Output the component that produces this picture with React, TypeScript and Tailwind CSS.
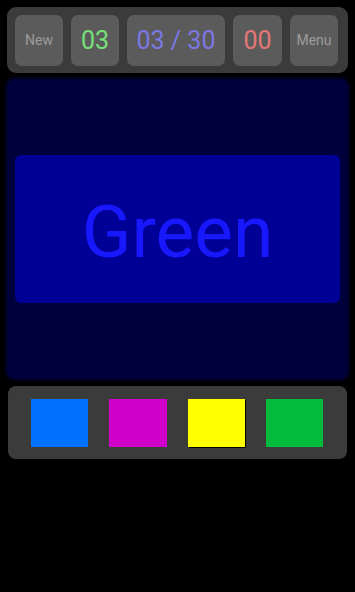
import React from "react";

export default function App() {
  const font = { fontFamily: "Roboto, 'Noto Sans', sans-serif" };
  return (
    <div className="w-[355px] h-[592px] bg-black overflow-hidden" style={font}>
      <div className="pt-[7px] px-[7px]">
        <div className="h-[66px] w-[341px] rounded-[9px] bg-[#3b3b3b] pt-[8px] pl-[8px] flex gap-[8px]">
          <div className="w-[48px] h-[51px] rounded-[7px] bg-[#5b5b5b] flex items-center justify-center text-[14px] text-[#9c9c9c]">New</div>
          <div className="w-[48px] h-[51px] rounded-[7px] bg-[#5b5b5b] flex items-center justify-center text-[25px] text-[#78e078]">03</div>
          <div className="w-[98px] h-[51px] rounded-[7px] bg-[#5b5b5b] flex items-center justify-center text-[25px] text-[#7b78e4] whitespace-pre">03 / 30</div>
          <div className="w-[49px] h-[51px] rounded-[7px] bg-[#5b5b5b] flex items-center justify-center text-[25px] text-[#e47878]">00</div>
          <div className="w-[48px] h-[51px] rounded-[7px] bg-[#5b5b5b] flex items-center justify-center text-[14px] text-[#9c9c9c]">Menu</div>
        </div>
      </div>
      <div className="px-[8px] pt-[7px]">
        <div className="h-[298px] w-[339px] rounded-[6px] bg-[#00003c] shadow-[0_0_4px_1px_#00005a] pt-[75px] px-[7px]">
          <div className="h-[148px] w-[325px] rounded-[6px] bg-[#000096] flex items-center justify-center">
            <span className="text-[73px] leading-none text-[#1818ff] mt-[6px]">Green</span>
          </div>
        </div>
      </div>
      <div className="px-[8px] pt-[8px]">
        <div className="h-[73px] w-[339px] rounded-[8px] bg-[#3b3b3b] pt-[13px] pl-[23px] flex gap-[21px]">
          <div className="w-[57px] h-[48px] bg-[#0070ff]" />
          <div className="w-[58px] h-[48px] bg-[#d000c8]" />
          <div className="w-[57px] h-[48px] bg-[#ffff00] shadow-[1px_1px_0_#000]" />
          <div className="w-[57px] h-[48px] bg-[#00bb3c]" />
        </div>
      </div>
    </div>
  );
}
